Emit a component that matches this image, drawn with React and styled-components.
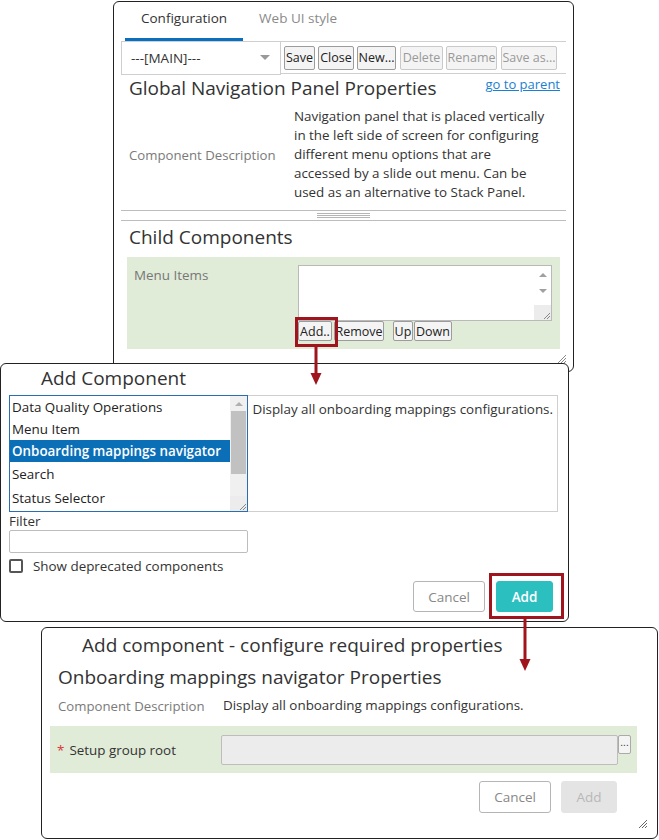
import React from 'react';
import styled, { createGlobalStyle } from 'styled-components';

const GlobalStyle = createGlobalStyle`
  html, body { margin: 0; padding: 0; background: #fff; }
  body { font-family: 'Open Sans', 'Noto Sans', sans-serif; color: #333; }
  * { box-sizing: border-box; }
`;

const Canvas = styled.div`
  position: relative;
  width: 659px;
  height: 840px;
  overflow: hidden;
`;

const Window = styled.div`
  position: absolute;
  left: ${p => p.$x}px;
  top: ${p => p.$y}px;
  width: ${p => p.$w}px;
  height: ${p => p.$h}px;
  z-index: ${p => p.$z};
  background: #fff;
  border: 1px solid #222;
  border-radius: 6px;
`;

const Pane = styled.div`
  padding: 0 7px;
`;

const Tabs = styled.div`
  display: flex;
  height: 39px;
  margin-left: 4px;
`;

const Tab = styled.div`
  display: flex;
  align-items: center;
  padding: 0 16px 5px;
  font-size: 13.5px;
  color: ${p => (p.$active ? '#333' : '#8a8a8a')};
  border-bottom: 3px solid ${p => (p.$active ? '#0b6fbf' : 'transparent')};
`;

const Toolbar = styled.div`
  display: flex;
  align-items: center;
  height: 33px;
  border-top: 1px solid #cfcfcf;
  border-bottom: 1px solid #cfcfcf;
`;

const Select = styled.div`
  width: 160px;
  height: 34px;
  margin: -1px 0;
  padding: 0 10px 0 9px;
  display: flex;
  align-items: center;
  justify-content: space-between;
  border: 1px solid #cfcfcf;
  background: #fff;
  font-size: 13.5px;
  color: #333;
`;

const Caret = styled.span`
  width: 0;
  height: 0;
  border-left: 5px solid transparent;
  border-right: 5px solid transparent;
  border-top: 5px solid #999;
`;

const ToolButton = styled.button`
  width: ${p => p.$w}px;
  height: 24px;
  margin-left: ${p => p.$gap ?? 3}px;
  padding: 0;
  font-family: inherit;
  font-size: 12.5px;
  color: ${p => (p.disabled ? '#9a9a9a' : '#222')};
  background: #f4f4f4;
  border: 1px solid ${p => (p.disabled ? '#c9c9c9' : '#9c9c9c')};
  border-radius: 2px;
  white-space: nowrap;
  overflow: hidden;
`;

const HeadRow = styled.div`
  display: flex;
  justify-content: space-between;
  align-items: flex-start;
  padding: 1px 6px 0 8px;
`;

const Heading = styled.h2`
  margin: 0;
  font-weight: 400;
  font-size: 19px;
  line-height: 26px;
  color: #333;
  white-space: nowrap;
`;

const ParentLink = styled.a`
  font-size: 13px;
  line-height: 18px;
  color: #1a80d2;
  text-decoration: underline;
`;

const DescRow = styled.div`
  display: grid;
  grid-template-columns: ${p => p.$label}px 1fr;
  align-items: center;
  padding-left: ${p => p.$left || 8}px;
  margin-top: ${p => p.$top}px;
`;

const DescLabel = styled.div`
  font-size: 13.2px;
  color: #7a7a7a;
  white-space: nowrap;
`;

const DescText = styled.div`
  font-size: 13.4px;
  line-height: 19px;
  color: #333;
  white-space: nowrap;
`;

const Splitter = styled.div`
  margin-top: 8px;
  height: 11px;
  border-top: 1px solid #bdbdbd;
  border-bottom: 1px solid #bdbdbd;
  display: flex;
  justify-content: center;
  align-items: center;
`;

const Grip = styled.div`
  width: 53px;
  height: 5px;
  border-top: 1px solid #b5b5b5;
  border-bottom: 1px solid #b5b5b5;
  background: linear-gradient(#b5b5b5, #b5b5b5) center / 100% 1px no-repeat;
`;

const SubHeading = styled(Heading)`
  padding-left: ${p => p.$left || 8}px;
  margin-top: ${p => p.$top || 1}px;
`;

const GreenPanel = styled.div`
  display: flex;
  margin: ${p => p.$margin};
  padding: ${p => p.$pad};
  background: #e0ebd8;
  align-items: ${p => p.$align || 'flex-start'};
`;

const FieldLabel = styled.div`
  width: ${p => p.$w}px;
  flex-shrink: 0;
  margin-top: ${p => p.$top || 0}px;
  font-size: 13.4px;
  color: ${p => p.$color || '#777'};
  white-space: nowrap;
`;

const Star = styled.span`
  color: #d33;
  margin-right: 5px;
`;

const Column = styled.div`
  display: flex;
  flex-direction: column;
`;

const TextArea = styled.div`
  display: flex;
  width: 254px;
  height: 56px;
  background: #fff;
  border: 1px solid #b9b9b9;
`;

const ScrollTrack = styled.div`
  margin-left: auto;
  width: 17px;
  display: flex;
  flex-direction: column;
  align-items: center;
  background: ${p => p.$bg || '#fff'};
`;

const ArrowUp = styled.span`
  margin-top: ${p => p.$mt || 6}px;
  width: 0;
  height: 0;
  border-left: 4px solid transparent;
  border-right: 4px solid transparent;
  border-bottom: 4px solid ${p => p.$c || '#a0a0a0'};
`;

const ArrowDown = styled.span`
  margin-top: 12px;
  width: 0;
  height: 0;
  border-left: 4px solid transparent;
  border-right: 4px solid transparent;
  border-top: 4px solid #a0a0a0;
`;

const Thumb = styled.div`
  width: 15px;
  height: 63px;
  margin-top: 5px;
  background: #c1c1c1;
`;

const Corner = styled.div`
  margin-top: auto;
  width: 17px;
  height: 15px;
  background: #ececec;
  display: flex;
  align-items: flex-end;
  justify-content: flex-end;
`;

const SmallRow = styled.div`
  display: flex;
`;

const MiniButton = styled.button`
  width: ${p => p.$w}px;
  height: 20px;
  margin-left: ${p => p.$gap || 0}px;
  padding: 0;
  font-family: inherit;
  font-size: 12.5px;
  color: #222;
  background: #f4f4f4;
  border: 1px solid #9c9c9c;
  border-radius: 2px;
  white-space: nowrap;
`;

const Title = styled.div`
  padding-left: ${p => p.$left}px;
  margin-top: ${p => p.$top}px;
  font-size: 19px;
  line-height: 24px;
  color: #333;
  white-space: nowrap;
`;

const Body = styled.div`
  padding: 0 10px 0 8px;
`;

const PickRow = styled.div`
  display: flex;
  margin-top: 5px;
  height: 117px;
`;

const ListBox = styled.div`
  width: 240px;
  display: flex;
  border: 1px solid #2a6db2;
  background: #fff;
  overflow: hidden;
`;

const Items = styled.div`
  flex: 1;
  display: flex;
  flex-direction: column;
`;

const Item = styled.div`
  height: ${p => p.$h}px;
  display: flex;
  align-items: center;
  padding-left: 2px;
  font-size: 13.4px;
  white-space: nowrap;
  color: ${p => (p.$selected ? '#fff' : '#222')};
  background: ${p => (p.$selected ? '#0b6fb8' : 'transparent')};
  font-weight: ${p => (p.$selected ? 600 : 400)};
`;

const DescBox = styled.div`
  flex: 1;
  border: 1px solid #cfcfcf;
  border-left: none;
  padding: 4px 4px;
  font-size: 13.4px;
  color: #333;
  white-space: nowrap;
`;

const SmallLabel = styled.div`
  font-size: 13.4px;
  line-height: 18px;
  color: #333;
`;

const Input = styled.div`
  width: ${p => p.$w}px;
  height: ${p => p.$h}px;
  background: ${p => p.$bg || '#fff'};
  border: 1px solid #bdbdbd;
  border-radius: 2px;
`;

const CheckRow = styled.label`
  display: flex;
  align-items: center;
  margin-top: 4px;
  font-size: 13.4px;
  color: #333;
`;

const CheckBox = styled.span`
  width: 14px;
  height: 14px;
  margin-right: 10px;
  border: 2px solid #555;
  border-radius: 2px;
`;

const Actions = styled.div`
  display: flex;
  justify-content: flex-end;
  gap: ${p => p.$gap}px;
  margin-top: ${p => p.$top}px;
  padding-right: ${p => p.$right}px;
`;

const DialogButton = styled.button`
  width: ${p => p.$w}px;
  height: ${p => p.$h}px;
  padding: 0;
  font-family: inherit;
  font-size: 13.5px;
  border-radius: 3px;
  border: 1px solid ${p => (p.$primary ? '#2bbfbf' : p.disabled ? '#e4e4e4' : '#b5b5b5')};
  background: ${p => (p.$primary ? '#2bbfbf' : p.disabled ? '#e4e4e4' : '#fff')};
  color: ${p => (p.$primary ? '#fff' : p.disabled ? '#b8b8b8' : '#888')};
  font-weight: ${p => (p.$primary ? 600 : 400)};
`;

const DotsButton = styled.button`
  width: 13px;
  height: 19px;
  padding: 0 0 4px;
  font-size: 10px;
  line-height: 10px;
  border: 1px solid #aaa;
  border-radius: 2px;
  background: #f4f4f4;
  color: #333;
  align-self: flex-start;
`;

const ResizeGrip = styled.svg`
  position: absolute;
  right: ${p => p.$r}px;
  bottom: ${p => p.$b}px;
`;

const Highlight = styled.div`
  position: absolute;
  left: ${p => p.$x}px;
  top: ${p => p.$y}px;
  width: ${p => p.$w}px;
  height: ${p => p.$h}px;
  border: 3px solid #a0141e;
  z-index: 10;
`;

const Arrow = styled.svg`
  position: absolute;
  left: ${p => p.$x}px;
  top: ${p => p.$y}px;
  z-index: 10;
`;

const GripIcon = ({ r, b, c = '#8a8a8a' }) => (
  <ResizeGrip $r={r} $b={b} width="10" height="10" viewBox="0 0 10 10">
    <path d="M9 1 L1 9 M9 4 L4 9 M9 7 L7 9" stroke={c} strokeWidth="1" />
  </ResizeGrip>
);

const TinyGrip = () => (
  <svg width="9" height="9" viewBox="0 0 9 9">
    <path d="M8 2 L2 8 M8 5 L5 8" stroke="#888" strokeWidth="1" />
  </svg>
);

const DownArrow = ({ x, y, len }) => (
  <Arrow $x={x - 6} $y={y} width="12" height={len} viewBox={`0 0 12 ${len}`}>
    <rect x="4.5" y="0" width="3" height={len - 10} fill="#a0141e" />
    <path d={`M0.5 ${len - 12} L11.5 ${len - 12} L6 ${len} Z`} fill="#a0141e" />
  </Arrow>
);

const ConfigWindow = () => (
  <Window $x={113} $y={1} $w={461} $h={371} $z={1}>
    <Pane>
      <Tabs>
        <Tab $active>Configuration</Tab>
        <Tab>Web UI style</Tab>
      </Tabs>
      <Toolbar>
        <Select>
          ---[MAIN]---
          <Caret />
        </Select>
        <ToolButton $w={31}>Save</ToolButton>
        <ToolButton $w={36}>Close</ToolButton>
        <ToolButton $w={39}>New...</ToolButton>
        <ToolButton $w={43} $gap={4} disabled>Delete</ToolButton>
        <ToolButton $w={51} disabled>Rename</ToolButton>
        <ToolButton $w={56} $gap={4} disabled>Save as...</ToolButton>
      </Toolbar>
      <HeadRow>
        <Heading>Global Navigation Panel Properties</Heading>
        <ParentLink href="#">go to parent</ParentLink>
      </HeadRow>
      <DescRow $label={165} $top={6}>
        <DescLabel>Component Description</DescLabel>
        <DescText>
          Navigation panel that is placed vertically
          <br />
          in the left side of screen for configuring
          <br />
          different menu options that are
          <br />
          accessed by a slide out menu. Can be
          <br />
          used as an alternative to Stack Panel.
        </DescText>
      </DescRow>
      <Splitter>
        <Grip />
      </Splitter>
      <SubHeading $top={3}>Child Components</SubHeading>
      <GreenPanel $margin="7px 6px 0" $pad="8px 6px 8px 7px">
        <FieldLabel $w={164} $color="#777" $top={1}>
          Menu Items
        </FieldLabel>
        <Column>
          <TextArea>
            <ScrollTrack>
              <ArrowUp $mt={7} />
              <ArrowDown />
              <Corner>
                <TinyGrip />
              </Corner>
            </ScrollTrack>
          </TextArea>
          <SmallRow>
            <MiniButton $w={34}>Add..</MiniButton>
            <MiniButton $w={50} $gap={2}>Remove</MiniButton>
            <MiniButton $w={20} $gap={9}>Up</MiniButton>
            <MiniButton $w={38} $gap={1}>Down</MiniButton>
          </SmallRow>
        </Column>
      </GreenPanel>
    </Pane>
    <GripIcon r={6} b={7} />
  </Window>
);

const AddWindow = () => (
  <Window $x={0} $y={363} $w={569} $h={259} $z={2}>
    <Title $left={40} $top={2}>Add Component</Title>
    <Body>
      <PickRow>
        <ListBox>
          <Items>
            <Item $h={22}>Data Quality Operations</Item>
            <Item $h={22}>Menu Item</Item>
            <Item $h={22} $selected>Onboarding mappings navigator</Item>
            <Item $h={23}>Search</Item>
            <Item $h={26}>Status Selector</Item>
          </Items>
          <ScrollTrack $bg="#f0f0f0">
            <ArrowUp $mt={6} $c="#b0b0b0" />
            <Thumb />
            <Corner>
              <TinyGrip />
            </Corner>
          </ScrollTrack>
        </ListBox>
        <DescBox>Display all onboarding mappings configurations.</DescBox>
      </PickRow>
      <SmallLabel>Filter</SmallLabel>
      <Input $w={239} $h={23} />
      <CheckRow>
        <CheckBox />
        Show deprecated components
      </CheckRow>
      <Actions $gap={11} $top={6} $right={5}>
        <DialogButton $w={72} $h={31}>Cancel</DialogButton>
        <DialogButton $w={57} $h={31} $primary>Add</DialogButton>
      </Actions>
    </Body>
  </Window>
);

const RequiredWindow = () => (
  <Window $x={41} $y={627} $w={617} $h={212} $z={3}>
    <Title $left={40} $top={5}>Add component - configure required properties</Title>
    <SubHeading $left={16} $top={7}>Onboarding mappings navigator Properties</SubHeading>
    <DescRow $label={165} $top={6} $left={16}>
      <DescLabel>Component Description</DescLabel>
      <DescText>Display all onboarding mappings configurations.</DescText>
    </DescRow>
    <GreenPanel $margin="11px 20px 0 8px" $pad="9px 6px 8px 7px" $align="center">
      <FieldLabel $w={164} $color="#333">
        <Star>*</Star>Setup group root
      </FieldLabel>
      <Input $w={397} $h={30} $bg="#ececec" />
      <DotsButton>...</DotsButton>
    </GreenPanel>
    <Actions $gap={10} $top={8} $right={40}>
      <DialogButton $w={72} $h={32}>Cancel</DialogButton>
      <DialogButton $w={56} $h={32} disabled>Add</DialogButton>
    </Actions>
    <GripIcon r={9} b={9} c="#666" />
  </Window>
);

export default function App() {
  return (
    <>
      <GlobalStyle />
      <Canvas>
        <ConfigWindow />
        <AddWindow />
        <RequiredWindow />
        <Highlight $x={295} $y={317} $w={43} $h={30} />
        <DownArrow x={316} y={346} len={39} />
        <Highlight $x={489} $y={573} $w={75} $h={46} />
        <DownArrow x={525} y={618} len={53} />
      </Canvas>
    </>
  );
}
